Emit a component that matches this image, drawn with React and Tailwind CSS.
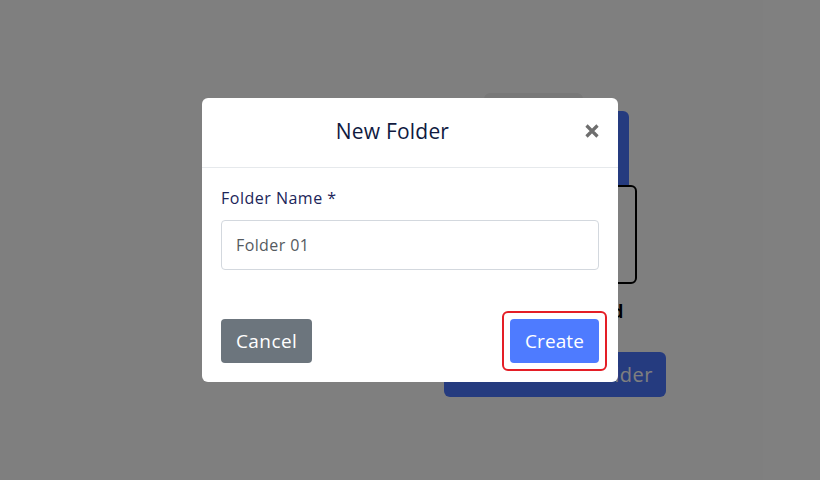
import React from "react";

const font = { fontFamily: "'Open Sans', 'Liberation Sans', sans-serif" };

function BackgroundPage() {
  // what shows of the page behind the dimmed overlay
  return (
    <div className="flex flex-col pl-[444px] pt-[93px]">
      <div className="ml-[40px] w-[99px] h-[30px] rounded-md bg-[#f0f0f0]" />
      <div className="flex flex-col ml-[156px] -mt-[12px] w-[37px]">
        <div className="w-[29px] h-[74px] rounded-tr-md bg-[#4b76ff]" />
        <div className="w-[37px] h-[99px] rounded-md border-2 border-black bg-white" />
        <div className="mt-[18px] ml-[12px] text-[18px] font-bold leading-none text-black">d</div>
      </div>
      <div className="mt-[32px] w-[222px] h-[45px] rounded-md bg-[#4b76ff] flex items-center justify-end pr-[13px] text-[20px] tracking-[0.5px] text-white">
        New Folder
      </div>
    </div>
  );
}

export default function App() {
  return (
    <div className="relative w-[820px] h-[480px] overflow-hidden bg-white" style={font}>
      <BackgroundPage />
      <div className="absolute inset-0 bg-black/50 flex items-start justify-center pt-[98px]">
        <div className="w-[416px] h-[284px] bg-white rounded-md flex flex-col">
          <div className="h-[70px] border-b border-[#e6e9ec] flex items-center pl-[19px] pr-[19px]">
            <h2 className="flex-1 text-center text-[21px] tracking-[0.2px] text-[#101a3f] leading-none -mt-[2px]">New Folder</h2>
            <button className="ml-[21px] -mt-[3px] p-0 flex">
              <svg width="14" height="14" viewBox="0 0 14 14">
                <path d="M1.5 1.5 L12.5 12.5 M12.5 1.5 L1.5 12.5" stroke="#6e6e6e" strokeWidth="3.2" strokeLinecap="butt" />
              </svg>
            </button>
          </div>
          <div className="flex-1 flex flex-col px-[19px] pt-[20px]">
            <label className="text-[16px] tracking-[0.5px] text-[#1b2559] leading-5">Folder Name *</label>
            <input
              readOnly
              value="Folder 01"
              className="mt-[12px] h-[50px] w-full rounded border border-[#d3d8de] px-[14px] text-[16px] tracking-[0.4px] text-[#555a60] outline-none"
              style={font}
            />
          </div>
          <div className="flex items-center justify-between px-[19px] pb-[19px]">
            <button className="h-[44px] px-[15px] rounded bg-[#6c757d] text-white text-[19px] tracking-[0.4px]">Cancel</button>
            <div className="relative">
              <span className="absolute -inset-[8px] rounded-md border-2 border-[#e41e26]" />
              <button className="relative h-[44px] px-[15px] rounded bg-[#4e7bff] text-white text-[19px] tracking-[0.1px]">Create</button>
            </div>
          </div>
        </div>
      </div>
    </div>
  );
}
